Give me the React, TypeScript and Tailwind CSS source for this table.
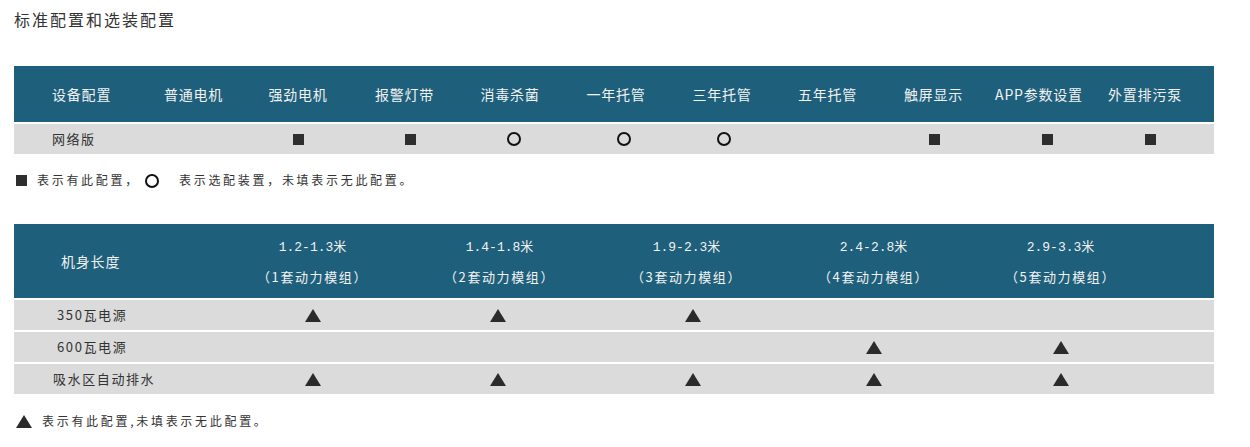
import React from "react";

const FONT = { fontFamily: '"Noto Sans CJK SC", "Noto Sans", sans-serif' };

function Square({ shift = 0 }: { shift?: number }) {
  return <span className="block w-[11px] h-[11px] bg-[#2e2e2e]" style={{ marginLeft: shift }} />;
}
function Circle({ shift = 0 }: { shift?: number }) {
  return (
    <span
      className="block w-[14px] h-[14px] rounded-full border-2 border-[#111]"
      style={{ marginLeft: shift }}
    />
  );
}
function Tri({ shift = 0, w = 16, h = 13 }: { shift?: number; w?: number; h?: number }) {
  return (
    <svg width={w} height={h} viewBox="0 0 16 13" style={{ marginLeft: shift }} className="block">
      <polygon points="8,0 16,13 0,13" fill="#2b2b2b" />
    </svg>
  );
}

type Col1 = { w: number; label: string; mark?: "s" | "c"; shift?: number };
const cols1: Col1[] = [
  { w: 107, label: "普通电机" },
  { w: 102, label: "强劲电机", mark: "s" },
  { w: 111, label: "报警灯带", mark: "s", shift: 11 },
  { w: 100, label: "消毒杀菌", mark: "c", shift: 8 },
  { w: 112, label: "一年托管", mark: "c", shift: 16 },
  { w: 100, label: "三年托管", mark: "c", shift: 4 },
  { w: 111, label: "五年托管" },
  { w: 101, label: "触屏显示", mark: "s", shift: 1 },
  { w: 110, label: "APP参数设置", mark: "s", shift: 16 },
  { w: 102, label: "外置排污泵", mark: "s", shift: 10 },
];

const cols2 = [
  { a: "1.2-1.3米", b: "（1套动力模组）" },
  { a: "1.4-1.8米", b: "（2套动力模组）" },
  { a: "1.9-2.3米", b: "（3套动力模组）" },
  { a: "2.4-2.8米", b: "（4套动力模组）" },
  { a: "2.9-3.3米", b: "（5套动力模组）" },
];
const triShift = [0, -4, 13, 1, 1];
const rows2 = [
  { label: "350瓦电源", pl: 43, marks: [true, true, true, false, false] },
  { label: "600瓦电源", pl: 43, marks: [false, false, false, true, true] },
  { label: "吸水区自动排水", pl: 39, marks: [true, true, true, true, true] },
];

export default function App() {
  return (
    <div className="w-[1250px] h-[447px] bg-white px-[14px] text-[#333]" style={FONT}>
      <div className="pt-[9px] h-[29px] text-[16px] leading-[20px] tracking-[2px] text-[#333]">
        标准配置和选装配置
      </div>

      {/* table 1 */}
      <div className="mt-[37px] w-[1200px]">
        <div className="flex h-[56px] bg-[#1e5f7b] items-center text-[14px] tracking-[0.8px] text-[#f2f2f2]">
          <div className="w-[126px] pl-[38px]">设备配置</div>
          {cols1.map((c, i) => (
            <div key={i} className="flex justify-center whitespace-nowrap" style={{ width: c.w }}>
              {c.label}
            </div>
          ))}
        </div>
        <div className="mt-[2px] flex h-[30px] bg-[#dbdbdb] items-center text-[13px] tracking-[1.5px]">
          <div className="w-[126px] pl-[38px]">网络版</div>
          {cols1.map((c, i) => (
            <div key={i} className="flex justify-center" style={{ width: c.w }}>
              {c.mark === "s" && <Square shift={c.shift} />}
              {c.mark === "c" && <Circle shift={c.shift} />}
            </div>
          ))}
        </div>
      </div>

      <div className="mt-[14px] h-[24px] flex items-center text-[12px] tracking-[2.7px] text-[#333] whitespace-nowrap">
        <span className="ml-[2px] mt-[1px] shrink-0">
          <Square />
        </span>
        <span className="ml-[10px] w-[98px] shrink-0 whitespace-nowrap">表示有此配置，</span>
        <span className="ml-[10px] mt-[1px] shrink-0">
          <Circle />
        </span>
        <span className="ml-[20px] whitespace-nowrap">表示选配装置，未填表示无此配置。</span>
      </div>

      {/* table 2 */}
      <div className="mt-[32px] w-[1200px]">
        <div className="flex h-[74px] bg-[#1e5f7b] items-center text-[#f2f2f2]">
          <div className="w-[205px] pl-[47px] text-[14px] tracking-[0.8px]">机身长度</div>
          {cols2.map((c, i) => (
            <div key={i} className="w-[187px] flex flex-col items-center pt-[1px] text-[13px] leading-[29px]">
              <div
                className="tracking-[0px] whitespace-nowrap"
                style={{ fontFamily: '"Liberation Mono", "Noto Sans CJK SC", monospace' }}
              >
                {c.a}
              </div>
              <div className="tracking-[1.6px] whitespace-nowrap">{c.b}</div>
            </div>
          ))}
        </div>
        {rows2.map((r, ri) => (
          <div key={ri} className="mt-[2px] flex h-[30px] bg-[#dbdbdb] items-center text-[13px] tracking-[1.6px]">
            <div className="w-[205px] whitespace-nowrap" style={{ paddingLeft: r.pl }}>
              {r.label}
            </div>
            {r.marks.map((m, i) => (
              <div key={i} className="w-[187px] flex justify-center">
                {m && <Tri shift={triShift[i]} />}
              </div>
            ))}
          </div>
        ))}
      </div>

      <div className="mt-[15px] h-[24px] flex items-center text-[12px] tracking-[2.7px] text-[#333]">
        <span className="ml-[2px]">
          <Tri w={16} h={13} />
        </span>
        <span className="ml-[10px] whitespace-nowrap">表示有此配置,未填表示无此配置。</span>
      </div>
    </div>
  );
}
